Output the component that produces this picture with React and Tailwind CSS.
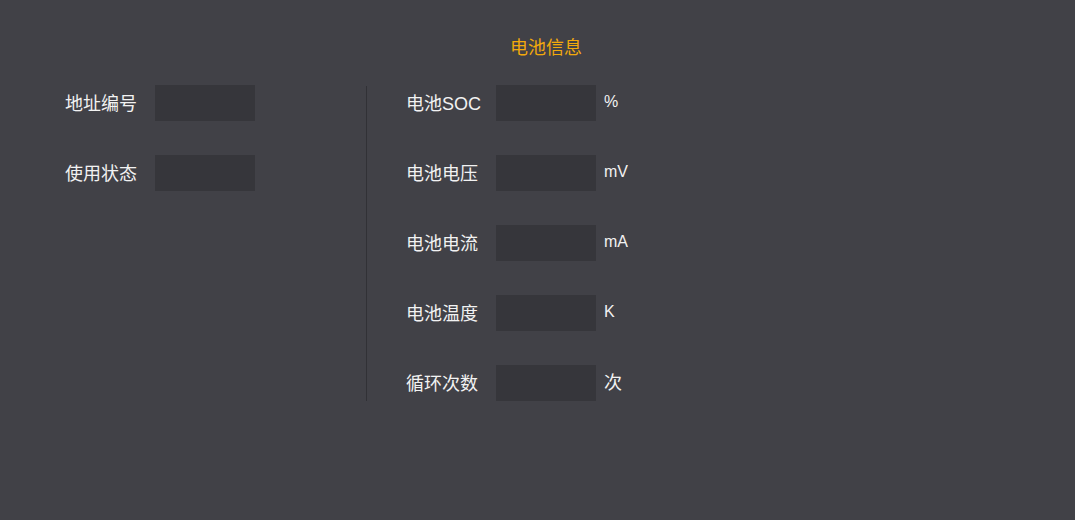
export default function App() {
  const left = ["地址编号", "使用状态"];
  const right = [
    { label: "电池SOC", unit: "%" },
    { label: "电池电压", unit: "mV" },
    { label: "电池电流", unit: "mA" },
    { label: "电池温度", unit: "K" },
    { label: "循环次数", unit: "次" },
  ];

  return (
    <div
      className="w-full h-[520px] bg-[#414147] text-[#f2f2f2]"
      style={{ fontFamily: '"Liberation Sans", "Noto Sans CJK SC", sans-serif' }}
    >
      <div className="pt-[36px] flex justify-center pl-[17px]">
        <span className="text-[18px] leading-[24px] text-[#f2a90c]">电池信息</span>
      </div>

      <div className="flex mt-[25px] pl-[65px]">
        {/* 左侧 */}
        <div className="w-[301px] flex flex-col gap-[34px]">
          {left.map((l) => (
            <div key={l} className="flex items-center h-[36px]">
              <span className="w-[90px] text-[18px] mt-[2px]">{l}</span>
              <div className="w-[100px] h-[36px] bg-[#36363b]"></div>
            </div>
          ))}
        </div>

        <div className="w-px bg-[#313136] mt-px"></div>

        {/* 右侧 */}
        <div className="pl-[39px] flex flex-col gap-[34px]">
          {right.map((r) => (
            <div key={r.label} className="flex items-center h-[36px]">
              <span className="w-[90px] text-[18px] mt-[2px]">{r.label}</span>
              <div className="w-[100px] h-[36px] bg-[#36363b]"></div>
              <span className={`ml-[8px] -mt-[2px] ${r.unit === "次" ? "text-[18px] mt-[1px]" : "text-[16px]"}`}>{r.unit}</span>
            </div>
          ))}
        </div>
      </div>
    </div>
  );
}
